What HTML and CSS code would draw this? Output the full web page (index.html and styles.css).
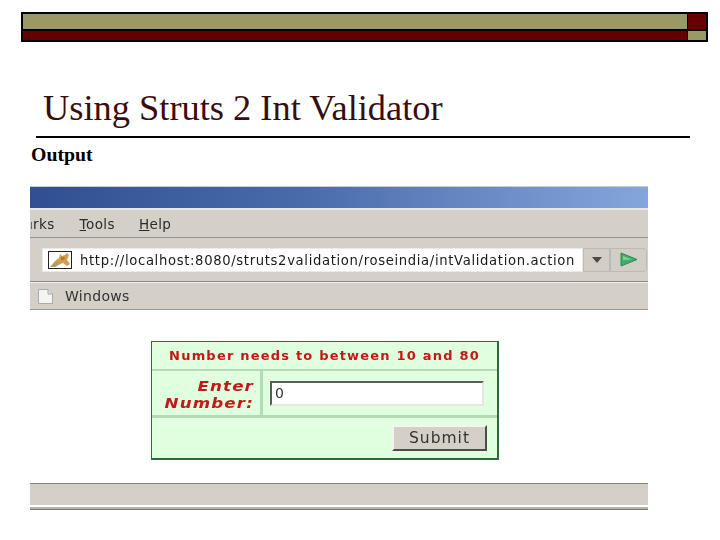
FILE: index.html
```html
<!DOCTYPE html>
<html lang="en">
<head>
<meta charset="utf-8">
<title>Using Struts 2 Int Validator</title>
<link rel="stylesheet" href="styles.css">
</head>
<body>
<div class="slide">
  <div class="deco">
    <div class="deco-olive"></div>
    <div class="deco-red"></div>
    <div class="deco-wide-red"></div>
    <div class="deco-small-olive"></div>
  </div>
  <h1 class="title">Using Struts 2 Int Validator</h1>
  <div class="rule"></div>
  <p class="subtitle">Output</p>
  <div class="shot">
    <div class="titlebar"></div>
    <div class="menubar">
      <span class="menu-sliver"></span>
      <span class="menu-clipped">rks</span>
      <span class="menu-tools"><u>T</u>ools</span>
      <span class="menu-help"><u>H</u>elp</span>
    </div>
    <div class="addressbar">
      <div class="urlfield">
        <span class="favicon">
          <svg width="22" height="16" viewBox="0 0 22 16"><path d="M1 15 L6 9 L10 6 L11 2 L13 4 L16 3 L18 1 L20 3 L18 8 L21 12 L18 14 L14 11 L9 13 L6 15 Z" fill="#d2a04a"/><path d="M2 15 L8 10 L11 12 L6 15 Z" fill="#9aa27a"/><path d="M12 5 L16 5 L15 8 L12 8 Z" fill="#b07c30"/></svg>
        </span>
        <span class="url">http://localhost:8080/struts2validation/roseindia/intValidation.action</span>
      </div>
      <div class="dropdown"><svg width="10" height="6" viewBox="0 0 10 6"><path d="M0 0H10L5 6Z" fill="#4a4a48"/></svg></div>
      <div class="gobtn"><svg width="18" height="15" viewBox="0 0 18 15"><path d="M1 1 L17 7.500 L1 14 Z" fill="#3fae6a" stroke="#2b8a4c" stroke-width="1"/><path d="M3 4 L12 7.500 L3 8 Z" fill="#7fd09a"/></svg></div>
    </div>
    <div class="linksbar">
      <svg class="docicon" width="17" height="17" viewBox="0 0 17 17"><path d="M1.500 1.500H11L15.500 6V15.500H1.500Z" fill="#f4f4f2" stroke="#a9a9b0"/><path d="M11 1.500V6H15.500" fill="#dcdce0" stroke="#a9a9b0"/></svg>
      <span>Windows</span>
    </div>
    <div class="content">
      <div class="form">
        <div class="err">Number needs to between 10 and 80</div>
        <div class="field-row">
          <div class="label"><div class="label-text">Enter<br>Number:</div></div>
          <div class="input-cell"><div class="input">0</div></div>
        </div>
        <div class="submit-row"><div class="submit">Submit</div></div>
      </div>
    </div>
    <div class="statusbar"></div>
    <div class="endline"></div>
  </div>
</div>
</body>
</html>
```
FILE: styles.css
```css
html, body { margin: 0; padding: 0; background: #fff; }
.slide { width: 720px; height: 540px; overflow: hidden; padding-top: 12px; box-sizing: border-box; }

.deco {
  display: grid;
  grid-template-columns: 664px 18px;
  grid-template-rows: 15px 9px;
  gap: 2px 1px;
  width: 683px;
  height: 26px;
  margin-left: 21px;
  padding: 2px;
  background: #000;
  box-sizing: content-box;
}
.deco-olive, .deco-small-olive { background: #999966; }
.deco-red, .deco-wide-red { background: #660000; }

.title {
  margin: 0 0 0 43px;
  padding-top: 46px;
  font: normal 36.400px/40px "Liberation Serif", serif;
  color: #3a0c0c;
  white-space: nowrap;
}
.rule { width: 654px; height: 2px; margin: 8px 0 0 36px; background: #000; }
.subtitle {
  margin: 5px 0 0 31px;
  font: bold 19.800px/22px "Liberation Serif", serif;
  color: #000;
}

.shot { width: 618px; margin: 21px 0 0 30px; font-family: "DejaVu Sans", sans-serif; filter: blur(0.35px); }
.titlebar {
  height: 21px;
  border-top: 1px solid #c9ccd0;
  background: linear-gradient(90deg, #2f4f92 0%, #4a6cab 45%, #85a6dc 100%);
}
.menubar {
  height: 27px;
  display: flex;
  align-items: center;
  overflow: hidden;
  border-top: 2px solid #e9e7e2;
  border-bottom: 1px solid #97958f;
  background: #d4d0c8;
  font-size: 13.500px;
  letter-spacing: 0.400px;
  color: #2b2b2b;
}
.menu-sliver { width: 1px; height: 7px; margin: 3px 0 0 1px; background: #666; }
.menu-clipped { margin-left: 1px; }
.menu-tools { margin-left: 25px; }
.menu-help { margin-left: 24px; }
.addressbar {
  height: 43px;
  display: flex;
  align-items: center;
  padding-left: 12px;
  box-sizing: border-box;
  background: #d4d0c8;
}
.urlfield {
  width: 541px;
  height: 24px;
  display: flex;
  align-items: center;
  box-sizing: border-box;
  padding-left: 5px;
  background: #fff;
  border: 1px solid #eceae6;
  overflow: hidden;
}
.favicon {
  width: 24px;
  height: 18px;
  flex: none;
  display: flex;
  align-items: center;
  justify-content: center;
  box-sizing: border-box;
  border: 1px solid #222;
}
.url {
  margin: 1px 0 0 8px;
  font-size: 13.200px;
  letter-spacing: 0.650px;
  color: #1a1a1a;
  white-space: nowrap;
}
.dropdown, .gobtn {
  height: 24px;
  display: flex;
  align-items: center;
  justify-content: center;
  box-sizing: border-box;
  background: #d2cec6;
  border: 1px solid #bdbab3;
}
.dropdown { width: 27px; }
.gobtn { width: 37px; border-radius: 0 4px 4px 0; }
.linksbar {
  height: 29px;
  display: flex;
  align-items: center;
  box-sizing: border-box;
  padding: 1px 0 0 7px;
  background: #d4d0c8;
  border-top: 1px solid #8b8983;
  box-shadow: inset 0 1px 0 #f2f0ec;
  border-bottom: 1px solid #99978f;
  font-size: 14px;
  letter-spacing: 0.300px;
  color: #333;
}
.docicon { margin-right: 11px; }
.content { height: 173px; padding: 31px 0 0 121px; box-sizing: border-box; background: #fff; }
.form {
  width: 348px;
  height: 119px;
  box-sizing: border-box;
  background: #dfffdf;
  border: 1px solid #2e6b3c;
  border-right-width: 2px;
  border-bottom-width: 2px;
  display: flex;
  flex-direction: column;
}
.err {
  height: 29px;
  display: flex;
  align-items: center;
  justify-content: center;
  box-sizing: border-box;
  border-bottom: 2px solid #b4dcb4;
  font-size: 13px;
  font-weight: bold;
  letter-spacing: 1.200px;
  color: #c41818;
  white-space: nowrap;
}
.field-row { height: 47px; display: flex; box-sizing: border-box; border-bottom: 3px solid #b4dcb4; }
.label {
  width: 111px;
  box-sizing: border-box;
  padding: 7px 6px 0 0;
  border-right: 3px solid #b4dcb4;
}
.label-text {
  text-align: right;
  font-size: 14.500px;
  line-height: 17px;
  letter-spacing: 1px;
  font-weight: bold;
  font-style: italic;
  color: #c41818;
  transform: scaleX(1.15);
  transform-origin: right center;
}
.input-cell { padding: 10px 0 0 7px; }
.input {
  width: 214px;
  height: 25px;
  box-sizing: border-box;
  padding-left: 3px;
  background: #fff;
  border: 2px solid #5a5a58;
  border-right-color: #e8e6e0;
  border-bottom-color: #e8e6e0;
  font-size: 14px;
  line-height: 21px;
  color: #333;
}
.submit-row { display: flex; justify-content: flex-end; padding: 7px 10px 0 0; }
.submit {
  width: 95px;
  height: 26px;
  box-sizing: border-box;
  background: #d4d0c8;
  border: 2px solid #4c4c4a;
  border-left-color: #f4f4f0;
  border-top-color: #f4f4f0;
  text-align: center;
  font-size: 15.500px;
  line-height: 22px;
  letter-spacing: 1px;
  color: #333;
}
.statusbar {
  height: 22px;
  background: #d4d0c8;
  border-top: 1px solid #86847f;
  box-sizing: border-box;
}
.endline { height: 2px; margin-top: 2px; background: #b5b2ac; border-bottom: 1px solid #77756f; }
```
